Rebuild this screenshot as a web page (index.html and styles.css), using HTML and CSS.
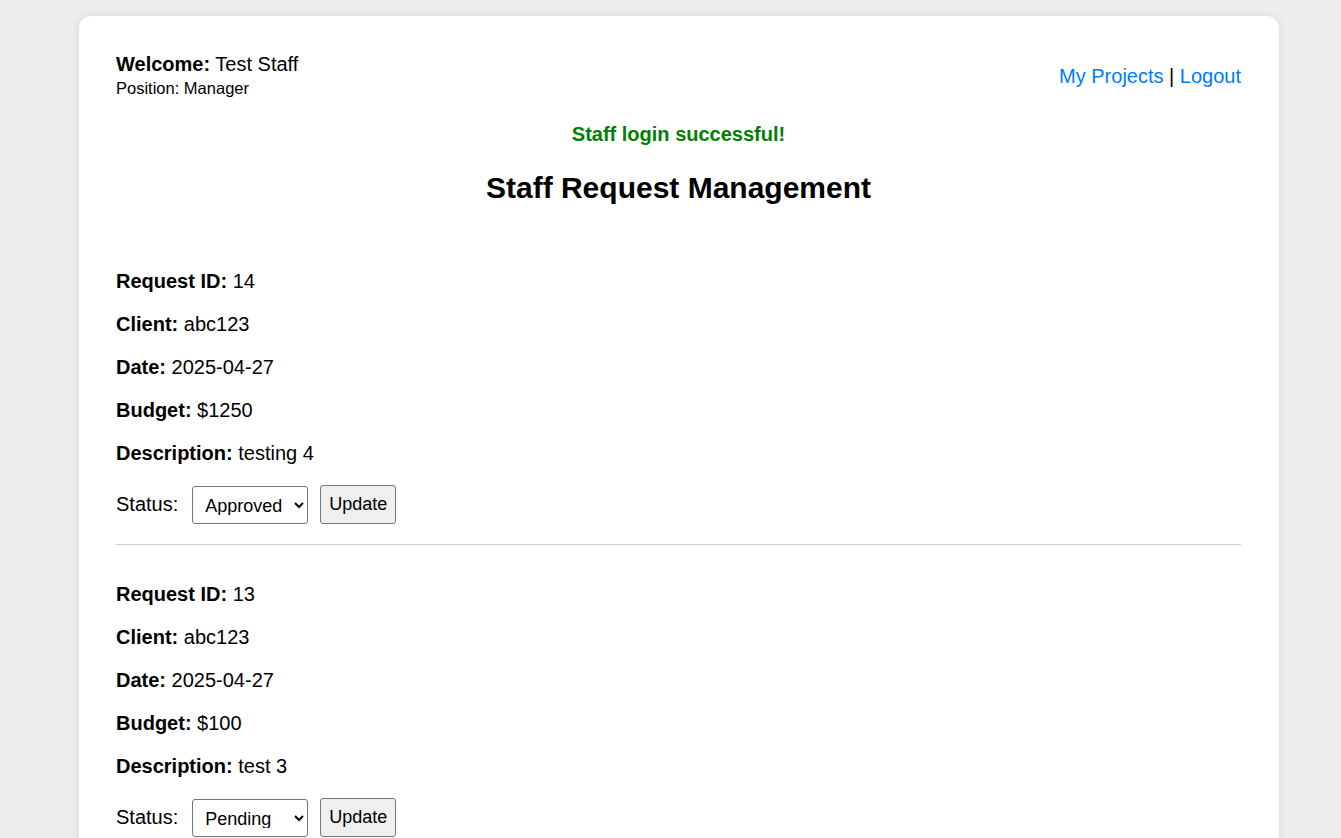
FILE: index.html
```html
<!DOCTYPE html>
<html>
<head>
<meta charset="utf-8">
<title>Staff Request Management</title>
<link rel="stylesheet" href="styles.css">
</head>
<body>
<div class="container">
  <div class="header">
    <div class="user-info">
      <div class="welcome"><strong>Welcome:</strong> Test Staff</div>
      <div class="position">Position: Manager</div>
    </div>
    <div class="nav">
      <a href="#">My Projects</a> | <a href="#">Logout</a>
    </div>
  </div>
  <p class="success">Staff login successful!</p>
  <h2 class="title">Staff Request Management</h2>

  <div class="request">
    <p><strong>Request ID:</strong> 14</p>
    <p><strong>Client:</strong> abc123</p>
    <p><strong>Date:</strong> 2025-04-27</p>
    <p><strong>Budget:</strong> $1250</p>
    <p><strong>Description:</strong> testing 4</p>
    <form class="status-form">
      <label class="status-label">Status:</label>
      <select class="status-select">
        <option>Pending</option>
        <option selected>Approved</option>
        <option>Rejected</option>
      </select>
      <button type="button" class="update-btn">Update</button>
    </form>
  </div>

  <div class="request">
    <p><strong>Request ID:</strong> 13</p>
    <p><strong>Client:</strong> abc123</p>
    <p><strong>Date:</strong> 2025-04-27</p>
    <p><strong>Budget:</strong> $100</p>
    <p><strong>Description:</strong> test 3</p>
    <form class="status-form">
      <label class="status-label">Status:</label>
      <select class="status-select">
        <option selected>Pending</option>
        <option>Approved</option>
        <option>Rejected</option>
      </select>
      <button type="button" class="update-btn">Update</button>
    </form>
  </div>
</div>
</body>
</html>
```

FILE: styles.css
```css
html, body {
  margin: 0;
  padding: 0;
}
body {
  background: #eeeeee;
  font-family: "Liberation Sans", Arial, sans-serif;
  color: #000;
  padding-top: 16px;
  padding-bottom: 40px;
}
.container {
  width: 1200px;
  box-sizing: border-box;
  margin-left: 79px;
  background: #fff;
  border-radius: 12px;
  box-shadow: 0 0 10px rgba(0, 0, 0, 0.1);
  padding: 37px 38px 30px 37px;
}
.header {
  display: flex;
  justify-content: space-between;
  align-items: center;
}
.welcome {
  font-size: 20px;
  line-height: 23px;
}
.position {
  font-size: 16.5px;
  line-height: 18px;
  margin-top: 3px;
}
.nav {
  font-size: 20px;
  line-height: 23px;
  padding-top: 2px;
}
.nav a {
  color: #007bff;
  text-decoration: none;
}
.success {
  color: green;
  font-weight: bold;
  font-size: 20px;
  line-height: 23px;
  text-align: center;
  margin: 26px 0 0;
}
.title {
  text-align: center;
  font-size: 30px;
  line-height: 34px;
  margin: 25px 0 23px;
}
.request {
  padding: 22px 0 20px;
  border-bottom: 1px solid #ccc;
}
.request + .request {
  padding-top: 18px;
}
.request p {
  font-size: 20px;
  line-height: 23px;
  margin: 20px 0;
}
.status-form {
  display: flex;
  align-items: center;
  font-size: 20px;
}
.status-label {
  margin-right: 14px;
}
.status-select {
  font-family: "Liberation Sans", Arial, sans-serif;
  font-size: 18px;
  padding: 8px 4px 8px 8px;
  width: 116px;
  height: 38px;
  border: 1px solid #767676;
  border-radius: 3px;
  background: #fff;
  color: #000;
  margin-right: 12px;
}
.update-btn {
  font-family: "Liberation Sans", Arial, sans-serif;
  font-size: 18px;
  height: 39px;
  width: 76px;
  padding: 0;
  background: #efefef;
  border: 1px solid #767676;
  border-radius: 3px;
  color: #000;
}
```
